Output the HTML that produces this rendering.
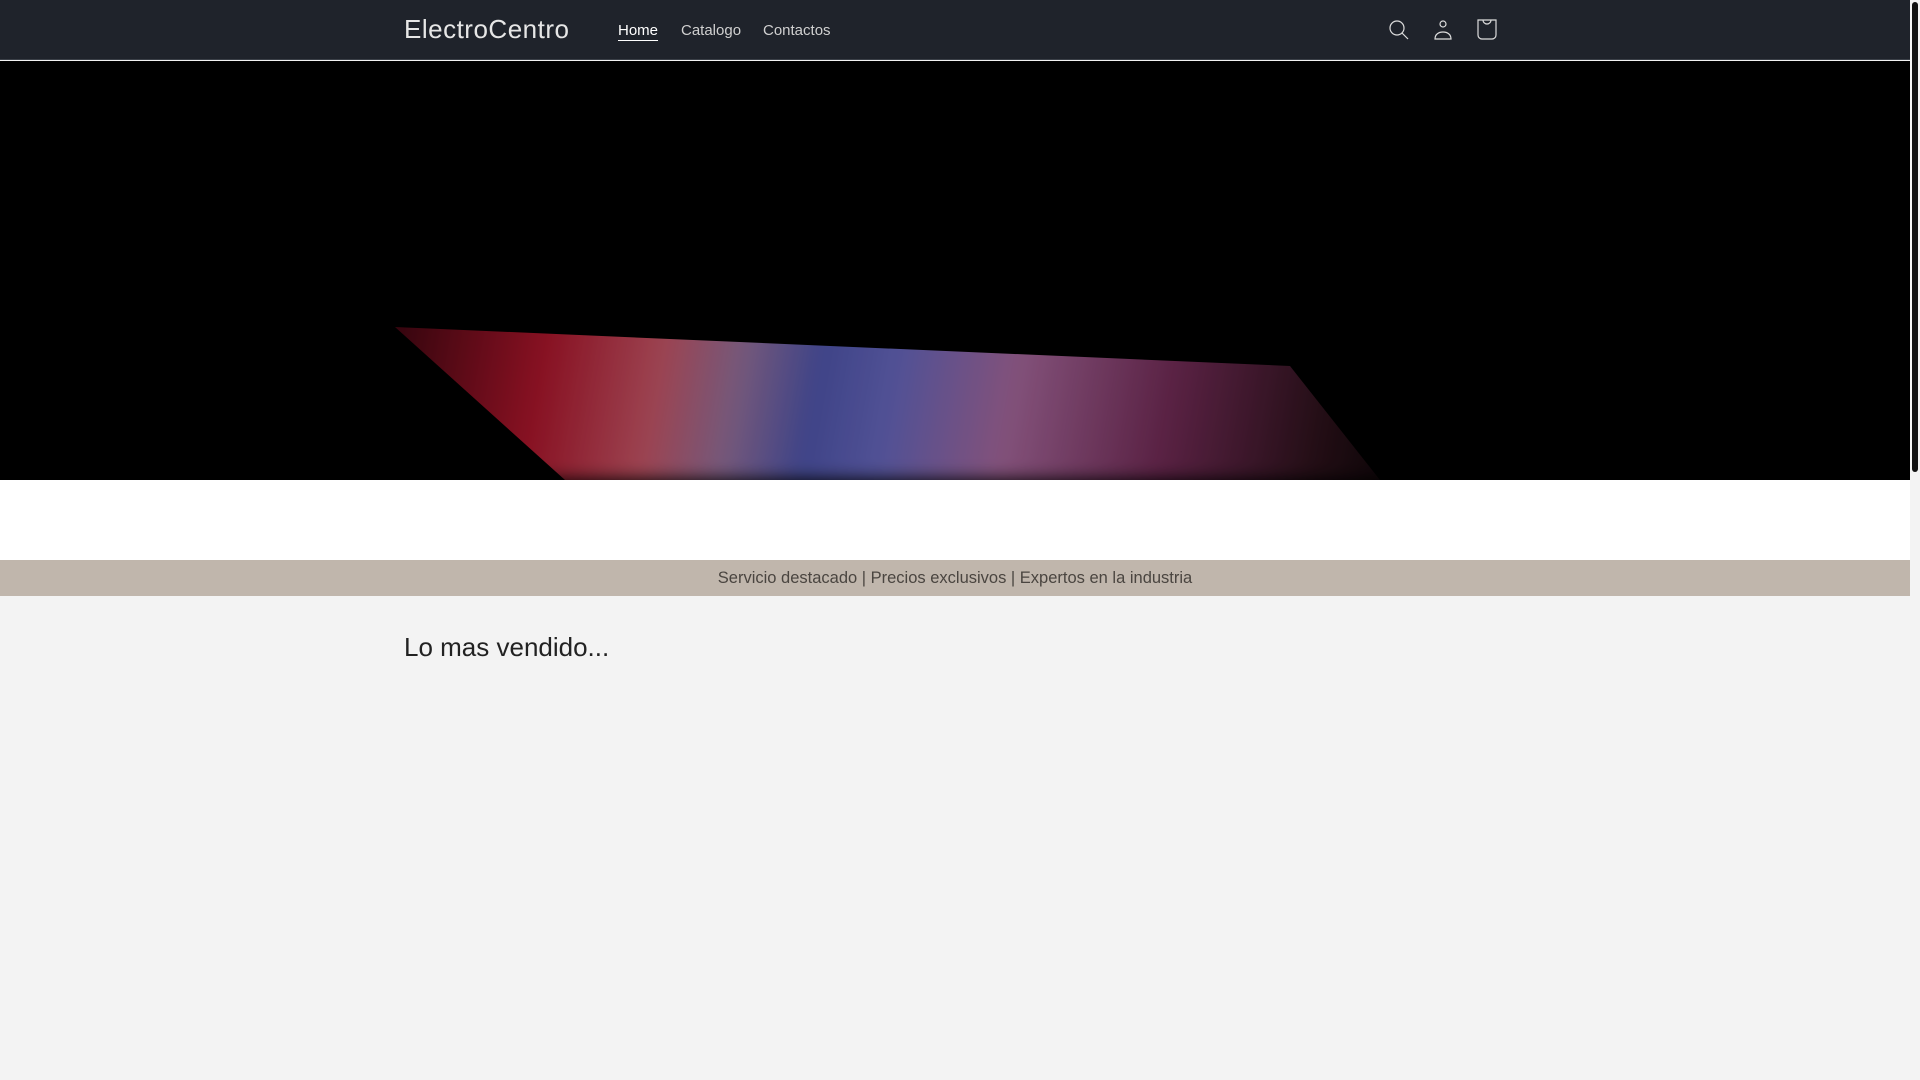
<!DOCTYPE html>
<html><head><meta charset="utf-8"><style>
*{margin:0;padding:0;box-sizing:border-box}
body{width:1920px;height:1080px;overflow:hidden;background:#f3f3f3;font-family:"Liberation Sans",sans-serif;position:relative}
.hdr{position:absolute;left:0;top:0;width:1910px;height:60px;background:#1f232b;border-bottom:1px solid #3a3f47}
.logo{position:absolute;left:404px;top:14px;font-size:26px;color:#e6e6e6;letter-spacing:0.5px}
.nav{position:absolute;top:22px;font-size:15px;color:#d0d0d0}
.hero{position:absolute;left:0;top:61px;width:1910px;height:419px;background:#000;overflow:hidden}
.lap{position:absolute;left:0;top:0;width:1910px;height:419px;filter:blur(9px);opacity:.85;
clip-path:polygon(395px 266px,1290px 305px,1380px 419px,565px 419px);
background:linear-gradient(100deg,#3a0610 0%,#3a0610 22%,#a01428 30%,#b85060 36%,#8a6890 40%,#4a50a0 44%,#6060b0 48%,#9a6090 54%,#6a2850 62%,#281018 70%,#000 76%)}
.white{position:absolute;left:0;top:480px;width:1910px;height:80px;background:#fff}
.band{position:absolute;left:0;top:560px;width:1910px;height:36px;background:#c0b6ac;text-align:center;font-size:16.5px;line-height:36px;color:#4a4540}
.h2{position:absolute;left:404px;top:632px;font-size:26px;color:#222}
.sb{position:absolute;left:1910px;top:0;width:10px;height:1080px;background:#f3f3f3}
.sb div{position:absolute;left:2px;top:2px;width:6px;height:470px;border-radius:3px;background:#111}
svg{position:absolute;top:18px}
</style></head><body>
<div class="hdr">
<div class="logo">ElectroCentro</div>
<div class="nav" style="left:618px;color:#fff;text-decoration:underline;text-underline-offset:5px">Home</div>
<div class="nav" style="left:681px">Catalogo</div>
<div class="nav" style="left:763px">Contactos</div>
<svg style="left:1387px" width="24" height="24" viewBox="0 0 24 24" fill="none" stroke="#ddd" stroke-width="1.2"><circle cx="10" cy="10" r="7"/><path d="M15 15l6 6"/></svg>
<svg style="left:1431px" width="24" height="24" viewBox="0 0 24 24" fill="none" stroke="#ddd" stroke-width="1.2"><circle cx="12" cy="6" r="3"/><path d="M4 21c0-5 4-7 8-7s8 2 8 7z"/></svg>
<svg style="left:1475px" width="24" height="24" viewBox="0 0 24 24" fill="none" stroke="#ddd" stroke-width="1.2"><path d="M3 2h18v15a4 4 0 0 1-4 4H7a4 4 0 0 1-4-4z"/><path d="M8 2a4 4 0 0 0 8 0"/></svg>
</div>
<div class="hero"><div class="lap"></div></div>
<div class="white"></div>
<div class="band">Servicio destacado | Precios exclusivos | Expertos en la industria</div>
<div class="h2">Lo mas vendido...</div>
<div class="sb"><div></div></div>
</body></html>
